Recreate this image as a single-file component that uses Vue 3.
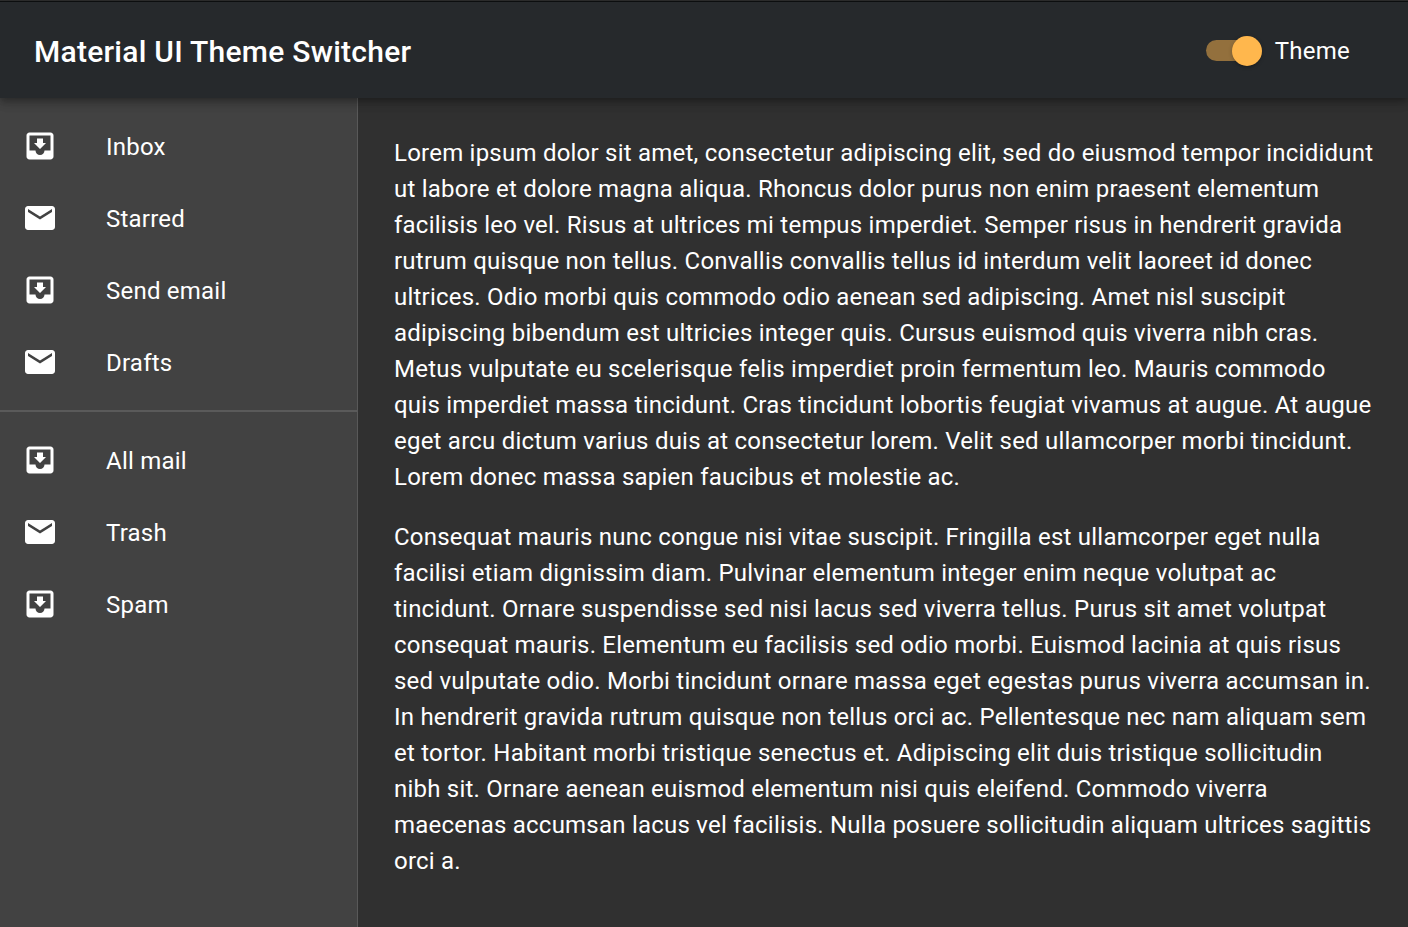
<script setup>
const inbox = 'M19 3H4.99c-1.11 0-1.98.9-1.98 2L3 19c0 1.1.88 2 1.99 2H19c1.1 0 2-.9 2-2V5c0-1.1-.9-2-2-2zm0 12h-4c0 1.66-1.35 3-3 3s-3-1.34-3-3H4.99V5H19v10zm-3-5h-2V7h-4v3H8l4 4 4-4z'
const mail = 'M20 4H4c-1.1 0-1.99.9-1.99 2L2 18c0 1.1.9 2 2 2h16c1.1 0 2-.9 2-2V6c0-1.1-.9-2-2-2zm0 4l-8 5-8-5V6l8 5 8-5v2z'
const groups = [
  ['Inbox', 'Starred', 'Send email', 'Drafts'],
  ['All mail', 'Trash', 'Spam'],
]
</script>

<template>
  <div class="app">
    <header class="bar">
      <h1>Material UI Theme Switcher</h1>
      <label class="theme">
        <span class="switch"><span class="track"></span><span class="thumb"></span></span>
        <span>Theme</span>
      </label>
    </header>
    <div class="body">
      <nav class="drawer">
        <ul v-for="(items, g) in groups" :key="g">
          <li v-for="(item, i) in items" :key="item">
            <svg viewBox="0 0 24 24"><path :d="i % 2 ? mail : inbox" /></svg>
            <span>{{ item }}</span>
          </li>
        </ul>
      </nav>
      <main>
        <p>Lorem ipsum dolor sit amet, consectetur adipiscing elit, sed do eiusmod tempor incididunt ut labore et dolore magna aliqua. Rhoncus dolor purus non enim praesent elementum facilisis leo vel. Risus at ultrices mi tempus imperdiet. Semper risus in hendrerit gravida rutrum quisque non tellus. Convallis convallis tellus id interdum velit laoreet id donec ultrices. Odio morbi quis commodo odio aenean sed adipiscing. Amet nisl suscipit adipiscing bibendum est ultricies integer quis. Cursus euismod quis viverra nibh cras. Metus vulputate eu scelerisque felis imperdiet proin fermentum leo. Mauris commodo quis imperdiet massa tincidunt. Cras tincidunt lobortis feugiat vivamus at augue. At augue eget arcu dictum varius duis at consectetur lorem. Velit sed ullamcorper morbi tincidunt. Lorem donec massa sapien faucibus et molestie ac.</p>
        <p>Consequat mauris nunc congue nisi vitae suscipit. Fringilla est ullamcorper eget nulla facilisi etiam dignissim diam. Pulvinar elementum integer enim neque volutpat ac tincidunt. Ornare suspendisse sed nisi lacus sed viverra tellus. Purus sit amet volutpat consequat mauris. Elementum eu facilisis sed odio morbi. Euismod lacinia at quis risus sed vulputate odio. Morbi tincidunt ornare massa eget egestas purus viverra accumsan in. In hendrerit gravida rutrum quisque non tellus orci ac. Pellentesque nec nam aliquam sem et tortor. Habitant morbi tristique senectus et. Adipiscing elit duis tristique sollicitudin nibh sit. Ornare aenean euismod elementum nisi quis eleifend. Commodo viverra maecenas accumsan lacus vel facilisis. Nulla posuere sollicitudin aliquam ultrices sagittis orci a.</p>
      </main>
    </div>
  </div>
</template>

<style scoped>
.app {
  box-sizing: border-box;
  display: flex;
  flex-direction: column;
  height: 927px;
  padding-top: 1px;
  overflow: hidden;
  background: #303030;
  color: #fff;
  font-family: Roboto, sans-serif;
  font-size: 24px;
  line-height: 36px;
  letter-spacing: 0.2251px;
}
.bar {
  position: relative;
  z-index: 1;
  box-sizing: border-box;
  flex: none;
  height: 97px;
  padding: 1px 58px 0 34px;
  border-top: 1px solid #0c0e0f;
  display: flex;
  align-items: center;
  justify-content: space-between;
  background: #26292c;
  box-shadow: 0 3px 6px -1px rgba(0, 0, 0, 0.2), 0 6px 8px rgba(0, 0, 0, 0.14), 0 1px 15px rgba(0, 0, 0, 0.12);
}
h1 {
  margin: 2px 0 0;
  font-size: 30px;
  font-weight: 500;
  line-height: 48px;
  letter-spacing: 0.26px;
}
.theme { display: flex; align-items: center; }
.switch { position: relative; width: 56px; height: 30px; margin-right: 13px; }
.track {
  position: absolute;
  left: 0;
  top: 4px;
  width: 51px;
  height: 21px;
  border-radius: 11px;
  background: #ffb74d;
  opacity: 0.5;
}
.thumb {
  position: absolute;
  right: 0;
  top: 0;
  width: 30px;
  height: 30px;
  border-radius: 50%;
  background: #ffb74d;
  box-shadow: 0 3px 2px -2px rgba(0, 0, 0, 0.2), 0 1px 4px rgba(0, 0, 0, 0.2);
}
.body { display: flex; flex: 1; min-height: 0; }
.drawer {
  box-sizing: border-box;
  flex: none;
  width: 358px;
  background: #424242;
  border-right: 1px solid #595959;
}
ul { list-style: none; margin: 0; padding: 12px 0; }
ul + ul { border-top: 2px solid #5a5a5a; }
li {
  display: flex;
  align-items: center;
  height: 72px;
  padding-left: 22px;
}
li svg { width: 36px; height: 36px; margin-right: 48px; fill: #fff; }
li span { padding-top: 2px; }
main { flex: 1; padding: 37px 34px 0 36px; }
p { margin: 0 0 24px; }
</style>
